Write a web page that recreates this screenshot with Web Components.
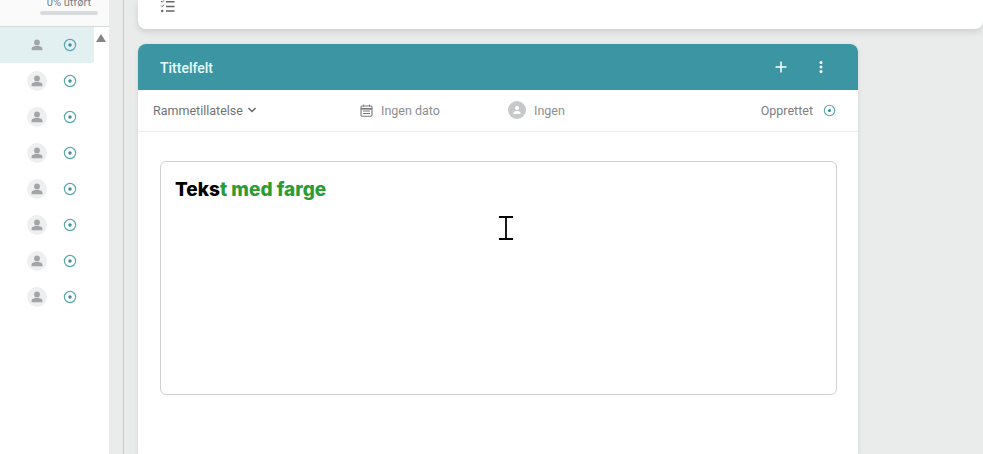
<!DOCTYPE html>
<html lang="no"><head><meta charset="utf-8"><title>Tittelfelt</title>
<style>
html,body{margin:0;height:454px;overflow:hidden;background:#eaecec;font-family:Roboto,"Liberation Sans",sans-serif}
.app{display:flex;height:454px;align-items:stretch}
</style></head><body>
<template id="t-status"><style>:host{display:inline-flex;width:14px;height:14px}svg{width:100%;height:100%}</style>
<svg viewBox="0 0 14 14"><circle cx="7" cy="7" r="5.6" fill="none" stroke="#5aa6ae" stroke-width="1.2"/><circle cx="7" cy="7" r="1.7" fill="#3b8f9c"/></svg></template>
<template id="t-row"><style>
:host{display:flex;height:36px;width:94px;align-items:center;box-sizing:border-box;padding-left:27px;gap:16px}
:host([selected]){background:#e2f0f2;border-radius:0 0 3px 0}
.av{width:20px;height:20px;border-radius:50%;background:#eeefef;display:flex;align-items:center;justify-content:center}
:host([selected]) .av{background:transparent}
svg{width:14px;height:14px}
</style><span class="av"><svg viewBox="0 0 14 14"><circle cx="7" cy="4.4" r="2.900" fill="#a2a6a8"/><path d="M1.600 12.200V10.600C1.600 8.700 5 7.800 7 7.800s5.400.9 5.400 2.800v1.600z" fill="#a2a6a8"/></svg></span><task-status></task-status></template>
<template id="t-side"><style>
:host{display:block;position:relative;width:109px;flex:none;background:#fff;overflow:hidden}
.head{height:27px;box-sizing:border-box;border-bottom:1px solid #d5d9da;background:#fafafa;display:flex;flex-direction:column;align-items:flex-end;padding-right:11px;justify-content:flex-end;padding-bottom:11px}
.pct{flex:none;font-size:11px;line-height:11px;color:#7a7f81;margin-right:7px;margin-bottom:3px}
.bar{flex:none;width:58px;height:4px;border-radius:2px;background:#d8dbdc}
.up{position:absolute;left:96px;top:34px;width:0;height:0;border:5px solid transparent;border-top:0;border-bottom:8px solid #858585}
</style><div class="head"><span class="pct">0% utført</span><span class="bar"></span></div><slot></slot><span class="up"></span></template>
<template id="t-gutter"><style>:host{display:flex;width:29px;flex:none;justify-content:center}i{width:1px;background:#c3cccd;margin-right:1px}</style><i></i></template>
<template id="t-top"><style>
:host{display:flex;height:29px;box-sizing:border-box;background:#fff;border-radius:0 0 8px 8px;box-shadow:0 3px 6px rgba(0,0,0,.12);padding-left:22px;align-items:flex-start}
svg{width:15px;height:14px}
</style><svg viewBox="0 0 15 14"><path d="M1 1l1.200 1.200L4 .3M1 5.500l1.200 1.200L4 4.800" fill="none" stroke="#666" stroke-width="1"/><circle cx="2.200" cy="11" r="1.200" fill="#666"/><path d="M6 1.800h8.500M6 6.500h8.500M6 11h8.500" stroke="#666" stroke-width="1.400"/></svg></template>
<template id="t-head"><style>
:host{display:flex;height:46px;box-sizing:border-box;background:#3b95a3;border-radius:8px 8px 0 0;align-items:center;padding:2px 30px 0 22px;color:#e8fbfb;font-size:14px;font-weight:500}
.t{flex:1}.btns{display:flex;align-items:center;gap:26px;margin-top:-3px}
svg{width:14px;height:14px;display:block}
</style><span class="t"><slot></slot></span><span class="btns">
<svg viewBox="0 0 14 14"><path d="M7 1.500v11M1.500 7h11" stroke="#fff" stroke-width="1.500"/></svg>
<svg viewBox="0 0 14 14"><circle cx="7" cy="2.400" r="1.500" fill="#fff"/><circle cx="7" cy="7" r="1.500" fill="#fff"/><circle cx="7" cy="11.600" r="1.500" fill="#fff"/></svg></span></template>
<template id="t-meta"><style>
:host{display:grid;grid-template-columns:207px 148px 1fr auto;height:42px;box-sizing:border-box;border-bottom:1px solid #eceeee;align-items:center;padding:0 22px 1px 15px;font-size:12.500px;color:#8b8f91;background:#fff}
span{display:inline-flex;align-items:center}
.a{color:#6f7375}.d{gap:8px}.d svg{width:13px;height:13px}
.u{gap:8px}.ua{width:18px;height:18px;border-radius:50%;background:#c6c8c9;display:flex;align-items:center;justify-content:center}.ua svg{width:10px;height:10px}
.o{gap:10px;color:#7d8183}.chev{width:10px;height:8px;margin-left:4px}
</style>
<span class="a">Rammetillatelse<svg class="chev" viewBox="0 0 10 8"><path d="M1.500 2l3.500 3.500L8.500 2" fill="none" stroke="#666" stroke-width="1.500"/></svg></span>
<span class="d"><svg viewBox="0 0 13 13"><rect x="1" y="2" width="11" height="10.200" rx="1.200" fill="none" stroke="#777" stroke-width="1.100"/><path d="M1 4.800h11" stroke="#777" stroke-width="1.600"/><path d="M3.500.6v2M9.500.6v2M3 7h7M3 9.500h7" stroke="#777" stroke-width="1"/></svg>Ingen dato</span>
<span class="u"><i class="ua"><svg viewBox="0 0 10 10"><circle cx="5" cy="3" r="2" fill="#fff"/><path d="M1.500 9V7.800C1.500 6.500 3.600 6 5 6s3.500.5 3.500 1.800V9z" fill="#fff"/></svg></i>Ingen</span>
<span class="o">Opprettet<task-status style="width:13px;height:13px"></task-status></span></template>
<template id="t-editor"><style>
:host{display:block;position:relative;height:234px;box-sizing:border-box;margin:29px 21px 0 22px;border:1px solid #cfd2d3;border-radius:6px;padding:16px 14px;font:800 19px/24px Inter,sans-serif;color:#000}
::slotted(b){color:#2a9c32;font-weight:800}
svg{position:absolute;left:338px;top:54px;width:14px;height:24px}
</style><slot></slot><svg viewBox="0 0 14 24"><path d="M0 1h14M0 23h14M7 1v22" stroke="#000" stroke-width="1.800" fill="none"/></svg></template>
<template id="t-card"><style>:host{display:block;width:720px;margin-top:15px;flex:1;background:#fff;border-radius:8px 8px 0 0;box-shadow:0 1px 4px rgba(0,0,0,.1)}</style><slot></slot></template>
<template id="t-main"><style>:host{display:flex;flex-direction:column;flex:1;min-width:0}</style><slot></slot></template>
<div class="app">
<task-sidebar>
<task-row selected></task-row><task-row></task-row><task-row></task-row><task-row></task-row><task-row></task-row><task-row></task-row><task-row></task-row><task-row></task-row>
</task-sidebar>
<task-gutter></task-gutter>
<task-main>
<top-card></top-card>
<task-card>
<card-head>Tittelfelt</card-head>
<card-meta></card-meta>
<text-editor>Teks<b>t med farge</b></text-editor>
</task-card>
</task-main>
</div>
<script>
const reg=(n,t)=>customElements.define(n,class extends HTMLElement{constructor(){super();this.attachShadow({mode:'open'}).appendChild(document.getElementById(t).content.cloneNode(true))}});
reg('task-status','t-status');reg('task-row','t-row');reg('task-sidebar','t-side');reg('task-gutter','t-gutter');reg('top-card','t-top');reg('card-head','t-head');reg('card-meta','t-meta');reg('text-editor','t-editor');reg('task-card','t-card');reg('task-main','t-main');
</script>
</body></html>
